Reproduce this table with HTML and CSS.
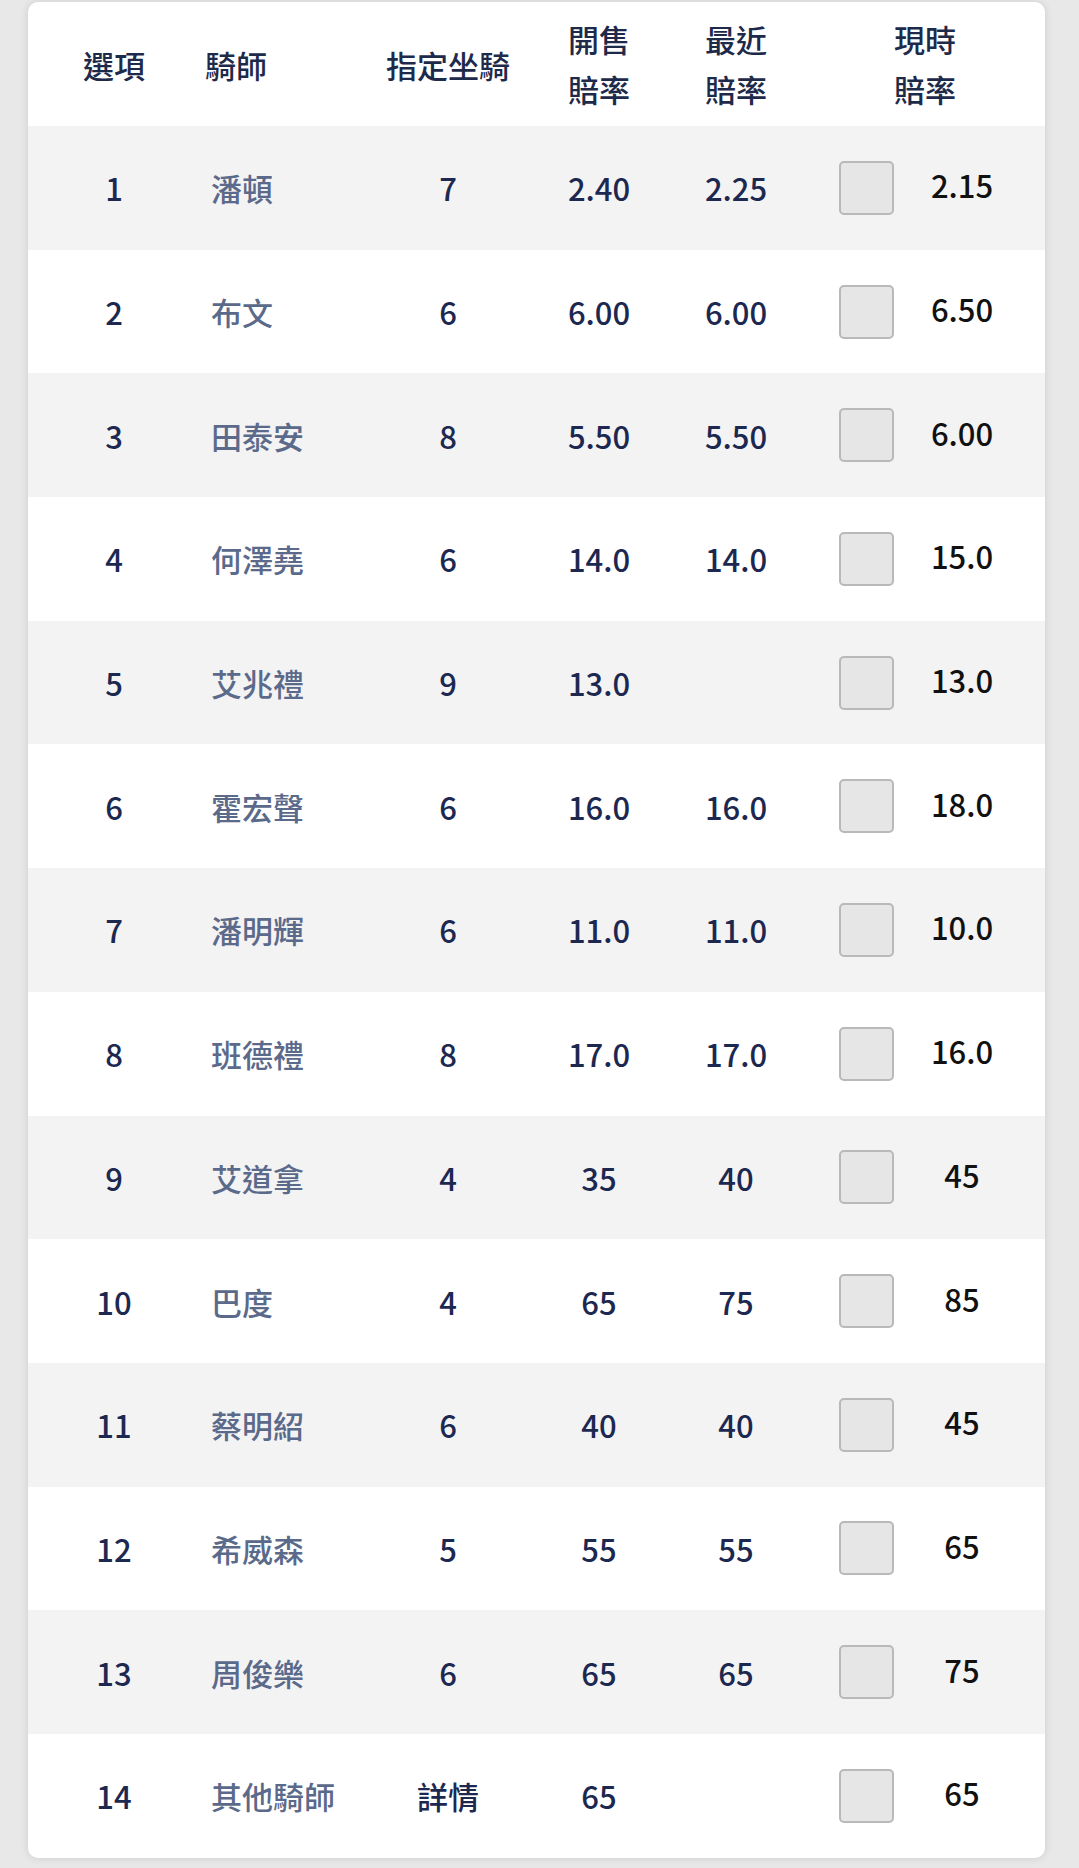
FILE: index.html
```html
<!DOCTYPE html>
<html lang="zh-Hant">
<head>
    <meta charset="UTF-8">
    <meta name="viewport" content="width=device-width, initial-scale=1.0">
    <title>騎師王</title>
    <link rel="stylesheet" href="styles.css">
</head>
<body>
    <div class="card">
        <table class="odds-table">
            <colgroup>
                <col class="col-no">
                <col class="col-jockey">
                <col class="col-rides">
                <col class="col-open">
                <col class="col-last">
                <col class="col-now">
            </colgroup>
            <thead>
                <tr>
                    <th>選項</th>
                    <th class="jockey-head">騎師</th>
                    <th>指定坐騎</th>
                    <th class="two-line">開售<br>賠率</th>
                    <th class="two-line">最近<br>賠率</th>
                    <th class="two-line now-head">現時<br>賠率</th>
                </tr>
            </thead>
            <tbody>
                <tr>
                    <td class="num">1</td><td class="jockey">潘頓</td><td class="num">7</td>
                    <td class="num">2.40</td><td class="num">2.25</td>
                    <td class="now"><div class="pick"><span class="box"></span><span class="odds">2.15</span></div></td>
                </tr>
                <tr>
                    <td class="num">2</td><td class="jockey">布文</td><td class="num">6</td>
                    <td class="num">6.00</td><td class="num">6.00</td>
                    <td class="now"><div class="pick"><span class="box"></span><span class="odds">6.50</span></div></td>
                </tr>
                <tr>
                    <td class="num">3</td><td class="jockey">田泰安</td><td class="num">8</td>
                    <td class="num">5.50</td><td class="num">5.50</td>
                    <td class="now"><div class="pick"><span class="box"></span><span class="odds">6.00</span></div></td>
                </tr>
                <tr>
                    <td class="num">4</td><td class="jockey">何澤堯</td><td class="num">6</td>
                    <td class="num">14.0</td><td class="num">14.0</td>
                    <td class="now"><div class="pick"><span class="box"></span><span class="odds">15.0</span></div></td>
                </tr>
                <tr>
                    <td class="num">5</td><td class="jockey">艾兆禮</td><td class="num">9</td>
                    <td class="num">13.0</td><td class="num"></td>
                    <td class="now"><div class="pick"><span class="box"></span><span class="odds">13.0</span></div></td>
                </tr>
                <tr>
                    <td class="num">6</td><td class="jockey">霍宏聲</td><td class="num">6</td>
                    <td class="num">16.0</td><td class="num">16.0</td>
                    <td class="now"><div class="pick"><span class="box"></span><span class="odds">18.0</span></div></td>
                </tr>
                <tr>
                    <td class="num">7</td><td class="jockey">潘明輝</td><td class="num">6</td>
                    <td class="num">11.0</td><td class="num">11.0</td>
                    <td class="now"><div class="pick"><span class="box"></span><span class="odds">10.0</span></div></td>
                </tr>
                <tr>
                    <td class="num">8</td><td class="jockey">班德禮</td><td class="num">8</td>
                    <td class="num">17.0</td><td class="num">17.0</td>
                    <td class="now"><div class="pick"><span class="box"></span><span class="odds">16.0</span></div></td>
                </tr>
                <tr>
                    <td class="num">9</td><td class="jockey">艾道拿</td><td class="num">4</td>
                    <td class="num">35</td><td class="num">40</td>
                    <td class="now"><div class="pick"><span class="box"></span><span class="odds">45</span></div></td>
                </tr>
                <tr>
                    <td class="num">10</td><td class="jockey">巴度</td><td class="num">4</td>
                    <td class="num">65</td><td class="num">75</td>
                    <td class="now"><div class="pick"><span class="box"></span><span class="odds">85</span></div></td>
                </tr>
                <tr>
                    <td class="num">11</td><td class="jockey">蔡明紹</td><td class="num">6</td>
                    <td class="num">40</td><td class="num">40</td>
                    <td class="now"><div class="pick"><span class="box"></span><span class="odds">45</span></div></td>
                </tr>
                <tr>
                    <td class="num">12</td><td class="jockey">希威森</td><td class="num">5</td>
                    <td class="num">55</td><td class="num">55</td>
                    <td class="now"><div class="pick"><span class="box"></span><span class="odds">65</span></div></td>
                </tr>
                <tr>
                    <td class="num">13</td><td class="jockey">周俊樂</td><td class="num">6</td>
                    <td class="num">65</td><td class="num">65</td>
                    <td class="now"><div class="pick"><span class="box"></span><span class="odds">75</span></div></td>
                </tr>
                <tr>
                    <td class="num">14</td><td class="jockey">其他騎師</td><td class="num">詳情</td>
                    <td class="num">65</td><td class="num"></td>
                    <td class="now"><div class="pick"><span class="box"></span><span class="odds">65</span></div></td>
                </tr>
            </tbody>
        </table>
    </div>
</body>
</html>
```

FILE: styles.css
```css
body {
    font-family: "Noto Sans CJK TC", "Noto Sans", sans-serif;
    margin: 0;
    padding: 2px 34px 10px 28px;
    background-color: #e8e8e8;
    color: #1c2850;
}
.card {
    background: #fff;
    border-radius: 10px;
    overflow: hidden;
    box-shadow: 0 0 8px rgba(0, 0, 0, 0.12);
}
.odds-table {
    width: 100%;
    border-collapse: collapse;
    table-layout: fixed;
    font-size: 31px;
}
.col-no { width: 172px; }
.col-jockey { width: 168px; }
.col-rides { width: 160px; }
.col-open { width: 142px; }
.col-last { width: 132px; }
.odds-table th {
    height: 124px;
    padding: 0;
    font-weight: 500;
    color: #1e2a4a;
    text-align: center;
}
.odds-table th.two-line {
    line-height: 50px;
}
.odds-table th.jockey-head {
    text-align: left;
    padding-left: 5px;
}
.odds-table th.now-head {
    padding-left: 3px;
}
.odds-table td {
    height: 123.7px;
    padding: 0;
    text-align: center;
    white-space: nowrap;
}
.odds-table tbody tr:nth-child(odd) {
    background-color: #f3f3f4;
}
.num {
    font-weight: 500;
    color: #1c2850;
}
.jockey {
    text-align: left !important;
    padding-left: 11px !important;
    color: #5b6a8a;
    font-weight: 500;
}
.pick {
    display: flex;
    align-items: center;
    padding-left: 37px;
}
.box {
    width: 55px;
    height: 54px;
    box-sizing: border-box;
    border: 2px solid #b9b9b9;
    border-radius: 5px;
    background-color: #e6e6e6;
}
.odds {
    width: 76px;
    margin-left: 30px;
    padding-bottom: 6px;
    text-align: center;
    color: #111;
    font-weight: 500;
}
```
